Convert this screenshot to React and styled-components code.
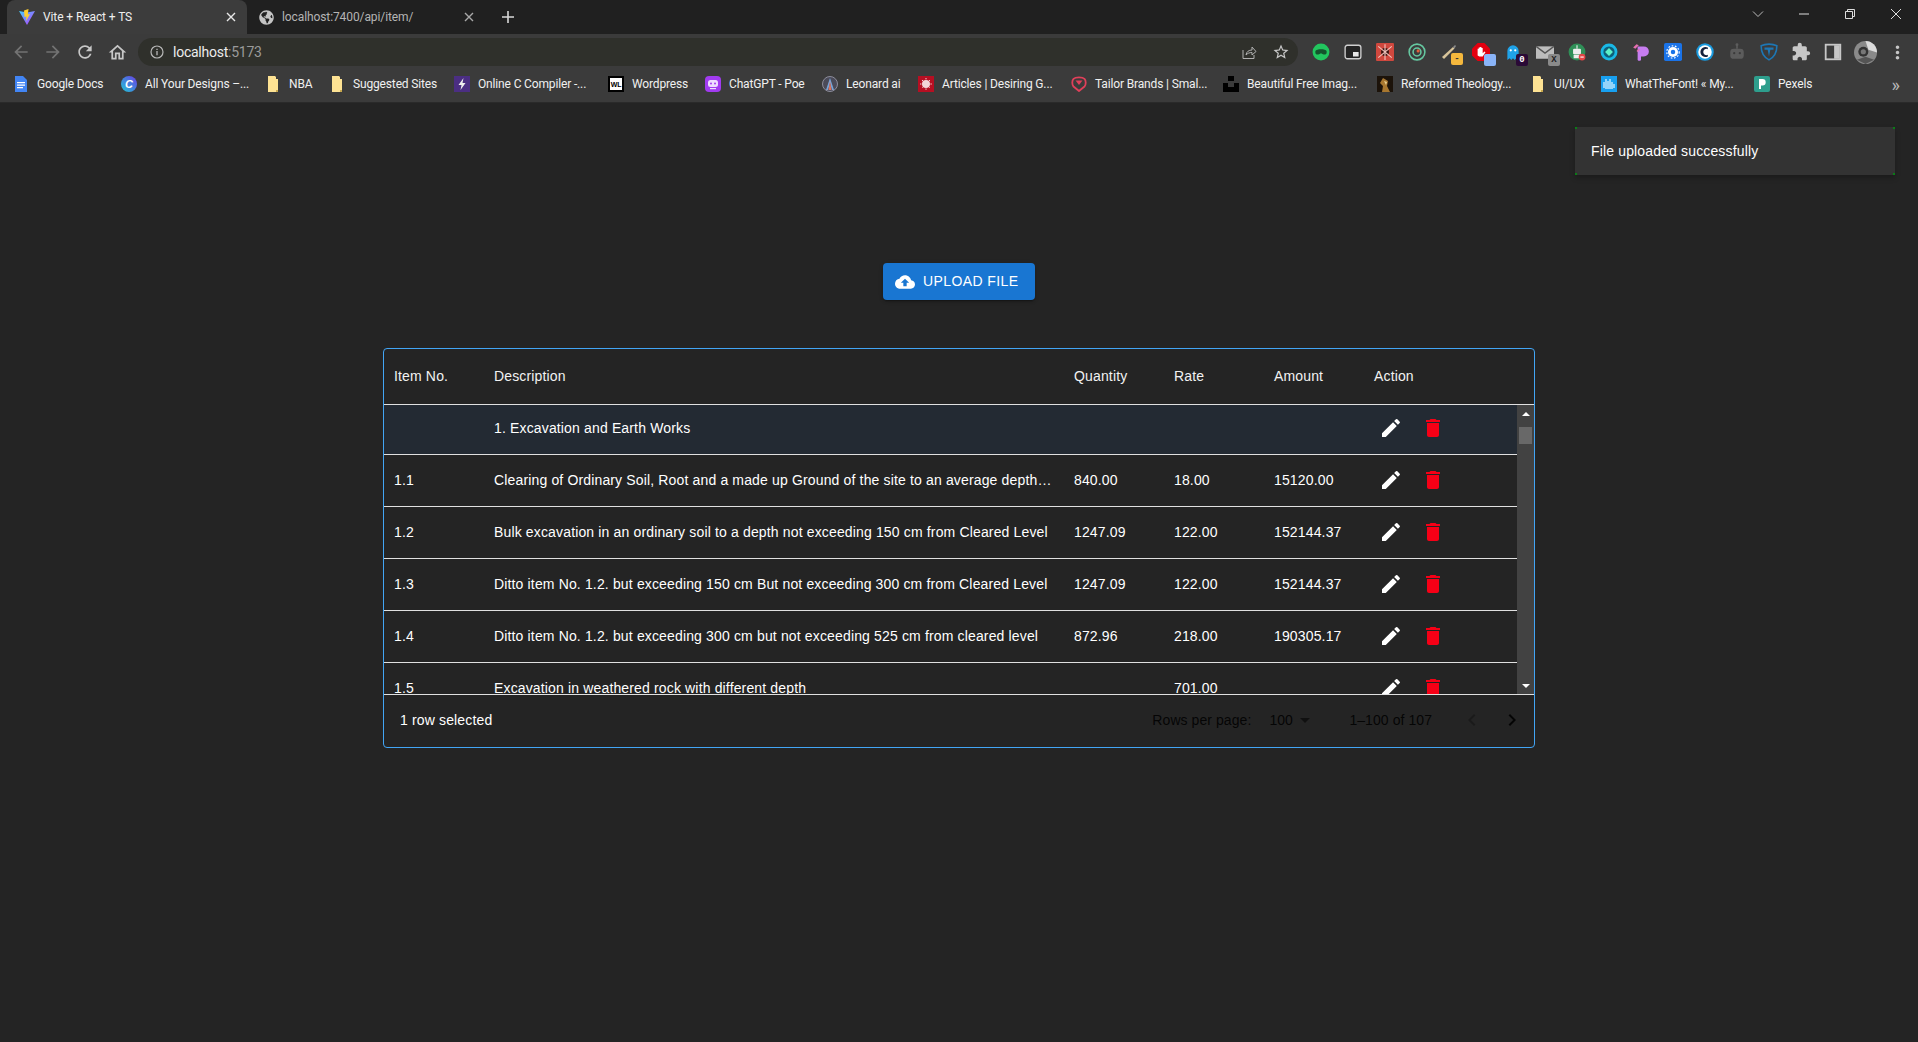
import React from "react";
import styled, { createGlobalStyle } from "styled-components";
import { FaGlobeAmericas } from "react-icons/fa";
import { MdExtension, MdMoreVert } from "react-icons/md";

const GlobalStyle = createGlobalStyle`
  html, body {
    margin: 0;
    background: #242424;
    overflow: hidden;
  }
  * {
    box-sizing: border-box;
  }
`;

const Mui = ({ d, size = 24, color = "currentColor" }) => (
  <svg width={size} height={size} viewBox="0 0 24 24" fill={color}>
    <path d={d} />
  </svg>
);

const paths = {
  edit: "M3 17.25V21h3.75L17.81 9.94l-3.75-3.75L3 17.25zM20.71 7.04c.39-.39.39-1.02 0-1.41l-2.34-2.34a.9959.9959 0 0 0-1.41 0l-1.83 1.83 3.75 3.75 1.83-1.83z",
  trash: "M6 19c0 1.1.9 2 2 2h8c1.1 0 2-.9 2-2V7H6v12zM19 4h-3.5l-1-1h-5l-1 1H5v2h14V4z",
  cloud: "M19.35 10.04C18.67 6.59 15.64 4 12 4 9.11 4 6.6 5.64 5.35 8.04 2.34 8.36 0 10.91 0 14c0 3.31 2.69 6 6 6h13c2.76 0 5-2.24 5-5 0-2.64-2.05-4.78-4.65-4.96zM14 13v4h-4v-4H7l5-5 5 5h-3z",
  back: "M20 11H7.83l5.59-5.59L12 4l-8 8 8 8 1.41-1.41L7.83 13H20z",
  forward: "M4 11h12.17l-5.59-5.59L12 4l8 8-8 8-1.41-1.41L16.17 13H4z",
  reload: "M17.65 6.35C16.2 4.9 14.21 4 12 4c-4.42 0-7.99 3.58-7.99 8s3.57 8 7.99 8c3.73 0 6.84-2.55 7.73-6h-2.08c-.82 2.33-3.04 4-5.65 4-3.31 0-6-2.69-6-6s2.69-6 6-6c1.66 0 3.14.69 4.22 1.78L13 11h7V4l-2.35 2.35z",
  home: "M12 5.69l5 4.5V18h-2v-6H9v6H7v-7.81l5-4.5M12 3L2 12h3v8h6v-6h2v6h6v-8h3L12 3z",
  star: "M22 9.24l-7.19-.62L12 2 9.19 8.63 2 9.24l5.46 4.73L5.82 21 12 17.27 18.18 21l-1.63-7.03L22 9.24zM12 15.4l-3.76 2.27 1-4.28-3.32-2.88 4.38-.38L12 6.1l1.71 4.04 4.38.38-3.32 2.88 1 4.28L12 15.4z",
  prev: "M15.41 7.41 14 6l-6 6 6 6 1.41-1.41L10.83 12z",
  next: "M8.59 16.59 13.17 12 8.59 7.41 10 6l6 6-6 6z",
  drop: "M7 10l5 5 5-5z",
};

const Svg = ({ children, size = 16 }) => (
  <svg width={size} height={size} viewBox="0 0 16 16">
    {children}
  </svg>
);

const glyph = { fontFamily: "Liberation Sans, sans-serif", fontWeight: 700 };

// favicons of the bookmarks bar
const favicons = {
  docs: (
    <Svg>
      <path d="M2 0h8l4 4v12H2z" fill="#4285f4" />
      <path d="M4 6h8v1.2H4zM4 8.5h8v1.2H4zM4 11h6v1.2H4z" fill="#fff" />
    </Svg>
  ),
  canva: (
    <Svg>
      <defs>
        <linearGradient id="cv" x1="0" y1="1" x2="1" y2="0">
          <stop offset="0" stopColor="#1fc7d4" />
          <stop offset="1" stopColor="#6a3de8" />
        </linearGradient>
      </defs>
      <circle cx="8" cy="8" r="8" fill="url(#cv)" />
      <text x="8" y="12" fontSize="11" textAnchor="middle" fill="#fff" fontStyle="italic" style={glyph}>C</text>
    </Svg>
  ),
  folder: (
    <Svg>
      <path d="M3 0h7l1 1v2h2v13H3z" fill="#fde293" />
      <path d="M11 14h2v2h-2z" fill="#c9a94e" />
    </Svg>
  ),
  bolt: (
    <Svg>
      <rect width="16" height="16" fill="#4b2e83" />
      <path d="M9.5 2 4.5 9h3l-1 5 5-7h-3z" fill="#eee" />
    </Svg>
  ),
  wl: (
    <Svg>
      <rect width="16" height="16" fill="#000" />
      <rect x="2" y="2" width="12" height="12" fill="#fff" />
      <text x="8" y="11" fontSize="7" textAnchor="middle" fill="#000" style={glyph}>WL</text>
    </Svg>
  ),
  poe: (
    <Svg>
      <rect width="16" height="16" rx="4" fill="#a13bf0" />
      <rect x="3" y="4" width="10" height="7" rx="2.5" fill="#eedcff" />
      <circle cx="6" cy="7.5" r="1" fill="#a13bf0" />
      <circle cx="10" cy="7.5" r="1" fill="#a13bf0" />
      <path d="M5 12h6v1.2H5z" fill="#eedcff" />
    </Svg>
  ),
  leonard: (
    <Svg>
      <circle cx="8" cy="8" r="7.5" fill="#4a4a58" stroke="#8d8d9c" />
      <path d="M8 2 4 14h2l2-7 2 7h2z" fill="#78a4d8" />
      <path d="M8 5 6.5 14h3z" fill="#d9745f" />
    </Svg>
  ),
  articles: (
    <Svg>
      <rect width="16" height="16" fill="#b60f22" />
      <circle cx="8" cy="8" r="4" fill="#f3d5d8" />
      <path d="M8 2v12M2 8h12M4 4l8 8M12 4l-8 8" stroke="#f3d5d8" strokeWidth="1" strokeDasharray="1.4 1.2" />
    </Svg>
  ),
  tailor: (
    <Svg>
      <path d="M8 15 2.5 10.5C1 9 0.8 4.5 2.5 2.8 4.5 1 11.5 1 13.5 2.8c1.7 1.7 1.5 6.2 0 7.7z" fill="none" stroke="#e0405a" strokeWidth="1.8" />
      <path d="M4.5 4.5 8 9l3.5-4.5z" fill="#e0405a" />
    </Svg>
  ),
  unsplash: (
    <Svg>
      <rect x="5" y="0" width="6" height="5" fill="#000" />
      <path d="M0 7h5v4h6V7h5v9H0z" fill="#000" />
    </Svg>
  ),
  reformed: (
    <Svg>
      <rect width="16" height="16" fill="#1c130a" />
      <path d="M6 2l5 3-1 5 3 6H5l1-6-3-3z" fill="#a8772f" />
      <path d="M7 5l3 1-1 3z" fill="#ead08f" />
    </Svg>
  ),
  wtf: (
    <Svg>
      <rect width="16" height="16" fill="#18a0f0" />
      <path d="M3 12V6M5 13V3M7 13V5M9 13V3M11 13V6M13 12V8" stroke="#e6f6ff" strokeWidth="1.2" />
    </Svg>
  ),
  pexels: (
    <Svg>
      <rect width="16" height="16" rx="2" fill="#2e9e8d" />
      <path d="M5 3h3.5a3.2 3.2 0 0 1 0 6.4H7V13H5z" fill="#fff" />
    </Svg>
  ),
};

function Avatar() {
  return (
    <Svg size={23}>
      <circle cx="8" cy="8" r="8" fill="#8a8a8a" />
      <path d="M8 0a8 8 0 0 1 8 8l-6-2z" fill="#dcdcdc" />
      <circle cx="6.5" cy="7.5" r="3.5" fill="#333" />
      <circle cx="6.5" cy="7.5" r="1.8" fill="#777" />
      <path d="M2 13l6-2 6 2-6 3z" fill="#555" />
    </Svg>
  );
}

// called at render time, the badges are declared further down
const extensionIcons = () => [
  <Svg size={18}>
    <circle cx="8" cy="8" r="7.5" fill="#22c55e" />
    <path d="M3 7c1-2 9-2 10 0v2c-1 2-3 1-5 0-2 1-4 2-5 0z" fill="#14532d" />
  </Svg>,
  <Svg size={18}>
    <rect x="1" y="2" width="14" height="12" rx="2" fill="#242424" stroke="#d0d0d0" strokeWidth="1.2" />
    <rect x="8" y="8" width="5" height="4" fill="#e8e8e8" />
  </Svg>,
  <Svg size={18}>
    <rect width="16" height="16" rx="1" fill="#d0483e" />
    <circle cx="8" cy="8" r="3.5" fill="#3a1512" />
    <path d="M2 3l12 10M14 3 2 13M8 1v14" stroke="#f2c3bc" strokeWidth="1" />
  </Svg>,
  <Svg size={18}>
    <circle cx="8" cy="8" r="7" fill="none" stroke="#66c7a0" strokeWidth="1.4" />
    <circle cx="8" cy="8" r="3.5" fill="none" stroke="#66c7a0" strokeWidth="1.4" />
    <circle cx="9" cy="7" r="1.4" fill="#e0603a" />
  </Svg>,
  <span>
    <Svg size={16}>
      <path d="M1 13 12 3l1.5 1.5L3 15z" fill="#d8c49a" />
      <path d="M12 3l2-2 1 1-1.5 2.5z" fill="#8a8a8a" />
    </Svg>
    <ExtBadge $bg="#f5b83d" $fg="#333">-</ExtBadge>
  </span>,
  <span>
    <Svg size={18}>
      <path d="M5 0h6l5 5v6l-5 5H5l-5-5V5z" fill="#e3000f" />
      <path d="M5 11V5h1v3-4h1.2v4-4.5h1.2V8V4.5h1.1V9l1.5-1.5 1 .8L9.5 12H6.5z" fill="#fff" />
    </Svg>
    <ExtBadge $bg="#8ab4f8" />
  </span>,
  <span>
    <Svg size={18}>
      <path d="M3 15V7a5 5 0 0 1 10 0v8l-2-1.5L9.5 15 8 13.5 6.5 15 5 13.5z" fill="#1fa2e8" />
      <circle cx="6" cy="6.5" r="1" fill="#fff" />
      <circle cx="10" cy="6.5" r="1" fill="#fff" />
    </Svg>
    <ExtBadge $bg="#2a0a36" $fg="#fff">0</ExtBadge>
  </span>,
  <span>
    <Svg size={18}>
      <rect x="0" y="3" width="16" height="11" fill="#bdbdbd" />
      <path d="M0 3l8 6 8-6" fill="none" stroke="#555" strokeWidth="1.2" />
    </Svg>
    <ExtBadge $bg="#8a8a8a" $fg="#222">X</ExtBadge>
  </span>,
  <Svg size={18}>
    <circle cx="8" cy="8" r="7.5" fill="#2f8f57" />
    <rect x="4.5" y="5" width="7" height="5" rx="1" fill="#eee" />
    <path d="M8 2v3M5.5 11h5v2h-5z" stroke="#eee" fill="#eee" />
    <circle cx="12.5" cy="12.5" r="3" fill="#e24646" />
    <path d="M11 12.5h3" stroke="#fff" />
  </Svg>,
  <Svg size={18}>
    <circle cx="8" cy="8" r="7.5" fill="#19b8e6" />
    <circle cx="8" cy="8" r="5" fill="#0f5e78" />
    <path d="M8 4.5 11.5 8 8 11.5 4.5 8z" fill="#5df0c8" />
  </Svg>,
  <Svg size={18}>
    <path d="M5 3h5.5a4.5 4.5 0 0 1 0 9H8v3a2 2 0 0 1-3 0z" fill="#c77df0" />
    <path d="M1 4l3-3 2 1-3 3zM4 7l2-2 1 1-2 2z" fill="#e66fb0" />
  </Svg>,
  <Svg size={18}>
    <rect width="16" height="16" rx="1.5" fill="#1a73e8" />
    <circle cx="8" cy="8" r="4.5" fill="#fff" />
    <circle cx="8" cy="8" r="2" fill="#1a73e8" />
    <circle cx="8" cy="8" r="5.5" fill="none" stroke="#fff" strokeWidth="1" strokeDasharray="1.5 1.5" />
  </Svg>,
  <Svg size={18}>
    <circle cx="8" cy="8" r="7.8" fill="#1a9be0" />
    <circle cx="8" cy="8" r="6" fill="#fff" />
    <path d="M10.5 4a4.5 4.5 0 1 0 0 8v-1.5a2.8 2.8 0 1 1 0-5z" fill="#14213d" />
  </Svg>,
  <Svg size={18}>
    <rect x="2" y="5" width="12" height="9" rx="3" fill="#5c5c5c" />
    <path d="M8 1v4" stroke="#5c5c5c" strokeWidth="1.5" />
    <circle cx="8" cy="1.5" r="1.3" fill="#5c5c5c" />
    <circle cx="5.5" cy="9" r="1" fill="#3b3b3b" />
    <circle cx="10.5" cy="9" r="1" fill="#3b3b3b" />
  </Svg>,
  <Svg size={18}>
    <path d="M8 15C3 12.5 1 8 1 2.5 3 1.5 5.5 1 8 1s5 .5 7 1.5C15 8 13 12.5 8 15z" fill="none" stroke="#1d77b5" strokeWidth="1.4" />
    <path d="M4 4h8v2H9.2l-1.2 6-1.2-6H4z" fill="#1d77b5" />
  </Svg>,
  <MdExtension size={20} color="#c7c7c7" />,
  <Svg size={18}>
    <rect x="1.5" y="1.5" width="13" height="13" fill="#3b3b3b" stroke="#c7c7c7" strokeWidth="1.6" />
    <rect x="9" y="2" width="5" height="12" fill="#c7c7c7" />
  </Svg>,
  <Avatar />,
  <MdMoreVert size={21} color="#c7c7c7" />,
];

const bookmarks = [
  { icon: "docs", label: "Google Docs", width: 108 },
  { icon: "canva", label: "All Your Designs –...", width: 144 },
  { icon: "folder", label: "NBA", width: 64 },
  { icon: "folder", label: "Suggested Sites", width: 125 },
  { icon: "bolt", label: "Online C Compiler -...", width: 154 },
  { icon: "wl", label: "Wordpress", width: 97 },
  { icon: "poe", label: "ChatGPT - Poe", width: 117 },
  { icon: "leonard", label: "Leonard ai", width: 96 },
  { icon: "articles", label: "Articles | Desiring G...", width: 153 },
  { icon: "tailor", label: "Tailor Brands | Smal...", width: 152 },
  { icon: "unsplash", label: "Beautiful Free Imag...", width: 154 },
  { icon: "reformed", label: "Reformed Theology...", width: 153 },
  { icon: "folder", label: "UI/UX", width: 71 },
  { icon: "wtf", label: "WhatTheFont! « My...", width: 153 },
  { icon: "pexels", label: "Pexels", width: 80 },
];

const rows = [
  { desc: "1. Excavation and Earth Works", group: true },
  {
    no: "1.1",
    desc: "Clearing of Ordinary Soil, Root and a made up Ground of the site to an average depth of 15 cm",
    qty: "840.00",
    rate: "18.00",
    amount: "15120.00",
  },
  {
    no: "1.2",
    desc: "Bulk excavation in an ordinary soil to a depth not exceeding 150 cm from Cleared Level",
    qty: "1247.09",
    rate: "122.00",
    amount: "152144.37",
  },
  {
    no: "1.3",
    desc: "Ditto item No. 1.2. but exceeding 150 cm But not exceeding 300 cm from Cleared Level",
    qty: "1247.09",
    rate: "122.00",
    amount: "152144.37",
  },
  {
    no: "1.4",
    desc: "Ditto item No. 1.2. but exceeding 300 cm but not exceeding 525 cm from cleared level",
    qty: "872.96",
    rate: "218.00",
    amount: "190305.17",
  },
  { no: "1.5", desc: "Excavation in weathered rock with different depth", rate: "701.00" },
];

const CloseIcon = ({ color }) => (
  <svg width="10" height="10" viewBox="0 0 10 10">
    <path d="M1 1l8 8M9 1 1 9" stroke={color} strokeWidth="1.4" />
  </svg>
);

const App = () => {
  return (
    <>
      <GlobalStyle />
      <Browser>
        <TabStrip>
          <Tab $active>
            <svg width="16" height="16" viewBox="0 0 16 16">
              <defs>
                <linearGradient id="vt" x1="0" y1="0" x2="1" y2="1">
                  <stop offset="0" stopColor="#41d1ff" />
                  <stop offset="1" stopColor="#bd34fe" />
                </linearGradient>
              </defs>
              <path d="M0 2l8 1.5L16 2 8 16z" fill="url(#vt)" />
              <path d="M9.5 0 5 1.5 5.5 8l2-.5L7 12l4-7-2.2.4z" fill="#ffd02e" />
            </svg>
            <TabTitle $active>Vite + React + TS</TabTitle>
            <TabClose><CloseIcon color="#e8e8e8" /></TabClose>
          </Tab>
          <Tab>
            <FaGlobeAmericas size={15} color="#c4c4c4" />
            <TabTitle>localhost:7400/api/item/</TabTitle>
            <TabClose><CloseIcon color="#a8a8a8" /></TabClose>
          </Tab>
          <NewTab>
            <svg width="14" height="14" viewBox="0 0 14 14">
              <path d="M7 1v12M1 7h12" stroke="#d8d8d8" strokeWidth="1.6" />
            </svg>
          </NewTab>
          <WindowControls>
            <WindowButton>
              <svg width="12" height="12" viewBox="0 0 12 12">
                <path d="M1 3.5 6 8.5l5-5" fill="none" stroke="#bbb" />
              </svg>
            </WindowButton>
            <WindowButton>
              <svg width="12" height="12" viewBox="0 0 12 12">
                <path d="M1 6h10" stroke="#ddd" />
              </svg>
            </WindowButton>
            <WindowButton>
              <svg width="12" height="12" viewBox="0 0 12 12">
                <path d="M1.5 3.5h7v7h-7zM3.5 3.5v-2h7v7h-2" fill="none" stroke="#ddd" />
              </svg>
            </WindowButton>
            <WindowButton>
              <svg width="12" height="12" viewBox="0 0 12 12">
                <path d="M1 1l10 10M11 1 1 11" stroke="#ddd" />
              </svg>
            </WindowButton>
          </WindowControls>
        </TabStrip>

        <Toolbar>
          <NavButton><Mui d={paths.back} size={20} color="#737373" /></NavButton>
          <NavButton><Mui d={paths.forward} size={20} color="#737373" /></NavButton>
          <NavButton><Mui d={paths.reload} size={20} color="#c7c7c7" /></NavButton>
          <NavButton><Mui d={paths.home} size={21} color="#c7c7c7" /></NavButton>
          <Omnibox>
            <svg width="14" height="14" viewBox="0 0 14 14">
              <circle cx="7" cy="7" r="6" fill="none" stroke="#b8b8b8" strokeWidth="1.2" />
              <path d="M7 6v4.2M7 3.7v1.2" stroke="#b8b8b8" strokeWidth="1.3" />
            </svg>
            <Url>
              localhost<UrlPort>:5173</UrlPort>
            </Url>
            <OmniActions>
              <svg width="16" height="16" viewBox="0 0 16 16">
                <path d="M2 6v8.5h11V11" fill="none" stroke="#b0b0b0" />
                <path d="M5 11c.5-3.5 3-5 6-5V3l4 4.5L11 11V8.5c-2.5 0-4.5.8-6 2.5z" fill="none" stroke="#b0b0b0" />
              </svg>
              <Mui d={paths.star} size={18} color="#c7c7c7" />
            </OmniActions>
          </Omnibox>
          <Extensions>
            {extensionIcons().map((icon, i) => (
              <Extension key={i}>{icon}</Extension>
            ))}
          </Extensions>
        </Toolbar>

        <BookmarksBar>
          {bookmarks.map((b) => (
            <Bookmark key={b.label} $width={b.width}>
              {favicons[b.icon]}
              <span>{b.label}</span>
            </Bookmark>
          ))}
          <MoreBookmarks>»</MoreBookmarks>
        </BookmarksBar>
      </Browser>

      <Page>
        <UploadButton>
          <Mui d={paths.cloud} size={20} color="#fff" />
          <span>Upload file</span>
        </UploadButton>

        <Grid>
          <HeaderRow>
            <Cell>Item No.</Cell>
            <Cell>Description</Cell>
            <Cell>Quantity</Cell>
            <Cell>Rate</Cell>
            <Cell>Amount</Cell>
            <Cell>Action</Cell>
          </HeaderRow>
          <Viewport>
            <Rows>
              {rows.map((r) => (
                <Row key={r.desc} $selected={r.group}>
                  <Cell>{r.no}</Cell>
                  <Cell>{r.desc}</Cell>
                  <Cell>{r.qty}</Cell>
                  <Cell>{r.rate}</Cell>
                  <Cell>{r.amount}</Cell>
                  <Actions>
                    <IconButton><Mui d={paths.edit} color="#fff" /></IconButton>
                    <IconButton><Mui d={paths.trash} color="#f60016" /></IconButton>
                  </Actions>
                </Row>
              ))}
            </Rows>
            <Scrollbar>
              <ScrollArrow />
              <ScrollThumb />
              <ScrollArrow $down />
            </Scrollbar>
          </Viewport>
          <Footer>
            <span>1 row selected</span>
            <Pagination>
              <span>Rows per page:</span>
              <PageSize>
                100
                <Mui d={paths.drop} size={24} color="rgba(0,0,0,0.54)" />
              </PageSize>
              <span>1–100 of 107</span>
              <PageButtons>
                <IconButton><Mui d={paths.prev} color="rgba(0,0,0,0.26)" /></IconButton>
                <IconButton><Mui d={paths.next} color="rgba(0,0,0,0.87)" /></IconButton>
              </PageButtons>
            </Pagination>
          </Footer>
        </Grid>

        <Toast>File uploaded successfully</Toast>
      </Page>
    </>
  );
};

const Browser = styled.header`
  font-family: Roboto, "Liberation Sans", sans-serif;
  color: #e8e8e8;
  background: #3b3b3b;
  border-bottom: 1px solid #2a2a2a;
`;

const TabStrip = styled.div`
  height: 34px;
  display: flex;
  align-items: stretch;
  padding-left: 7px;
  background: #202020;
`;

const Tab = styled.div`
  width: ${(p) => (p.$active ? "240px" : "238px")};
  display: flex;
  align-items: center;
  gap: 8px;
  padding: 0 10px 0 12px;
  background: ${(p) => (p.$active ? "#3c3c3c" : "transparent")};
  border-radius: 8px 8px 0 0;
`;

const TabTitle = styled.span`
  flex: 1;
  font-size: 12px;
  letter-spacing: -0.1px;
  color: ${(p) => (p.$active ? "#eeeeee" : "#b4b4b4")};
`;

const TabClose = styled.span`
  width: 12px;
  display: flex;
  justify-content: center;
`;

const NewTab = styled.div`
  width: 46px;
  display: flex;
  align-items: center;
  justify-content: center;
`;

const WindowControls = styled.div`
  margin-left: auto;
  margin-right: -1px;
  display: flex;
`;

const WindowButton = styled.div`
  width: 46px;
  height: 28px;
  display: flex;
  align-items: center;
  justify-content: center;
`;

const Toolbar = styled.div`
  height: 32px;
  display: flex;
  align-items: flex-end;
  padding: 0 5px;
`;

const NavButton = styled.div`
  width: 32px;
  height: 28px;
  display: flex;
  align-items: center;
  justify-content: center;
`;

const Omnibox = styled.div`
  flex: 1;
  height: 28px;
  margin-left: 5px;
  padding: 0 8px 0 12px;
  display: flex;
  align-items: center;
  gap: 9px;
  background: #2f302b;
  border-radius: 14px;
`;

const Url = styled.span`
  font-size: 14px;
  letter-spacing: -0.25px;
  color: #ececec;
`;

const UrlPort = styled.span`
  color: #9a9a9a;
`;

const OmniActions = styled.div`
  margin-left: auto;
  display: flex;
  align-items: center;
  gap: 15px;
`;

const Extensions = styled.div`
  margin-left: 7px;
  display: flex;
`;

const Extension = styled.div`
  width: 32px;
  height: 28px;
  display: flex;
  align-items: center;
  justify-content: center;

  > span {
    position: relative;
    display: flex;
  }
`;

const ExtBadge = styled.i`
  position: absolute;
  right: -6px;
  bottom: -5px;
  width: 12px;
  height: 12px;
  border-radius: 2px;
  background: ${(p) => p.$bg};
  color: ${(p) => p.$fg};
  font: 700 9px/12px "Liberation Mono", monospace;
  text-align: center;
`;

const BookmarksBar = styled.nav`
  height: 36px;
  display: flex;
  align-items: center;
  padding-left: 13px;
`;

const Bookmark = styled.div`
  width: ${(p) => p.$width}px;
  display: flex;
  align-items: center;
  gap: 8px;
  font-size: 12px;
  letter-spacing: -0.15px;
  color: #f0f0f0;
  white-space: nowrap;
`;

const MoreBookmarks = styled.div`
  margin-left: auto;
  margin-right: 18px;
  font-size: 18px;
  color: #b8b8b8;
`;

const Page = styled.main`
  position: relative;
  height: 939px;
  display: flex;
  flex-direction: column;
  align-items: center;
  padding-top: 160px;
  background: #242424;
  font-family: "Liberation Sans", Arial, sans-serif;
  font-size: 14px;
  letter-spacing: 0.01071em;
  color: #fff;
`;

const UploadButton = styled.button`
  width: 152px;
  height: 37px;
  flex: none;
  display: flex;
  align-items: center;
  gap: 8px;
  padding: 0 12px;
  border: 0;
  border-radius: 4px;
  background: #1976d2;
  color: #fff;
  font: inherit;
  letter-spacing: 0.02857em;
  text-transform: uppercase;
  box-shadow: 0 3px 1px -2px rgba(0, 0, 0, 0.2), 0 2px 2px 0 rgba(0, 0, 0, 0.14), 0 1px 5px 0 rgba(0, 0, 0, 0.12);

  span {
    margin-bottom: 2px;
  }
`;

const Grid = styled.section`
  width: 1152px;
  height: 400px;
  flex: none;
  margin-top: 48px;
  display: flex;
  flex-direction: column;
  border: 1px solid #42a5f5;
  border-radius: 4px;
`;

const columns = "100px 580px 100px 100px 100px 1fr";

const HeaderRow = styled.div`
  height: 56px;
  flex: none;
  display: grid;
  grid-template-columns: ${columns};
  align-items: center;
  padding-bottom: 2px;
  border-bottom: 1px solid #e0e0e0;
  color: #f2f2f2;
`;

const Cell = styled.div`
  padding: 0 10px;
  overflow: hidden;
  white-space: nowrap;
  text-overflow: ellipsis;
`;

const Viewport = styled.div`
  flex: 1;
  min-height: 0;
  display: flex;
  overflow: hidden;
`;

const Rows = styled.div`
  flex: 1;
  min-width: 0;
`;

const Row = styled.div`
  height: ${(p) => (p.$selected ? "50px" : "52px")};
  display: grid;
  grid-template-columns: ${columns};
  align-items: center;
  padding-bottom: ${(p) => (p.$selected ? "4px" : "2px")};
  border-bottom: 1px solid #e0e0e0;
  background: ${(p) => (p.$selected ? "#232a33" : "transparent")};
`;

const Actions = styled.div`
  display: flex;
  gap: 2px;
  padding-left: 7px;
`;

const IconButton = styled.span`
  width: 40px;
  height: 40px;
  display: flex;
  align-items: center;
  justify-content: center;
`;

const Scrollbar = styled.div`
  width: 17px;
  flex: none;
  display: flex;
  flex-direction: column;
  align-items: center;
  background: #424242;
`;

const ScrollArrow = styled.div`
  height: 17px;
  width: 17px;
  flex: none;
  display: flex;
  align-items: center;
  justify-content: center;
  margin-top: ${(p) => (p.$down ? "auto" : "0")};

  &::before {
    content: "";
    border-left: 4px solid transparent;
    border-right: 4px solid transparent;
    border-${(p) => (p.$down ? "top" : "bottom")}: 4px solid #fff;
  }
`;

const ScrollThumb = styled.div`
  width: 13px;
  height: 17px;
  margin-top: 5px;
  background: #686868;
`;

const Footer = styled.div`
  height: 53px;
  flex: none;
  display: flex;
  align-items: center;
  justify-content: space-between;
  padding: 0 2px 2px 16px;
  border-top: 1px solid #e0e0e0;
`;

const Pagination = styled.div`
  display: flex;
  align-items: center;
  letter-spacing: 0.005em;
  color: rgba(0, 0, 0, 0.87);
`;

const PageSize = styled.div`
  width: 80px;
  margin-left: 18px;
  display: flex;
  align-items: center;
`;

const PageButtons = styled.div`
  display: flex;
  margin-left: 20px;
`;

const Toast = styled.div`
  position: absolute;
  top: 24px;
  right: 23px;
  width: 320px;
  height: 48px;
  display: flex;
  align-items: center;
  padding-left: 16px;
  background-color: #333333;
  background-image: linear-gradient(#0a7d16, #0a7d16), linear-gradient(#0a7d16, #0a7d16),
    linear-gradient(#0a7d16, #0a7d16), linear-gradient(#0a7d16, #0a7d16);
  background-size: 2px 2px;
  background-repeat: no-repeat;
  background-position: top left, top right, bottom left, bottom right;
  box-shadow: 0 3px 5px rgba(0, 0, 0, 0.25);
`;

export default App;
